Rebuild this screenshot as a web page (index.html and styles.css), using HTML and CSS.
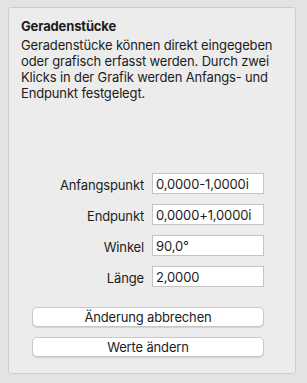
FILE: index.html
```html
<!DOCTYPE html>
<html lang="de">
<head>
    <meta charset="UTF-8">
    <meta name="viewport" content="width=device-width, initial-scale=1.0">
    <title>Geradenstücke</title>
    <link rel="stylesheet" href="styles.css">
</head>
<body>

<div class="panel">
    <h1>Geradenstücke</h1>
    <p class="info">Geradenstücke können direkt eingegeben oder grafisch erfasst werden. Durch zwei Klicks in der Grafik werden Anfangs- und Endpunkt festgelegt.</p>

    <form class="segment-form" onsubmit="event.preventDefault()">
        <label for="start">Anfangspunkt</label>
        <input type="text" id="start" value="0,0000-1,0000i">

        <label for="end">Endpunkt</label>
        <input type="text" id="end" value="0,0000+1,0000i">

        <label for="angle">Winkel</label>
        <input type="text" id="angle" value="90,0°">

        <label for="length">Länge</label>
        <input type="text" id="length" value="2,0000">
    </form>

    <div class="actions">
        <button type="button">Änderung abbrechen</button>
        <button type="button">Werte ändern</button>
    </div>
</div>

</body>
</html>
```

FILE: styles.css
```css
body {
    font-family: Inter, "Noto Sans", sans-serif;
    font-size: 13px;
    letter-spacing: -0.15px;
    color: #1c1c1c;
    margin: 0;
    padding: 7px 11px 9px 8px;
    background: #e3e3e3;
}
.panel {
    height: 367px;
    box-sizing: border-box;
    background: #ececec;
    border: 1px solid #cdcdcd;
    border-radius: 3px;
    padding: 10px 12px 0 12px;
}
.panel h1 {
    margin: 0;
    font-size: 13px;
    line-height: 16px;
    font-weight: 700;
}
.info {
    margin: 3px 0 0;
    line-height: 16px;
}
.segment-form {
    display: grid;
    grid-template-columns: 123px 112px;
    column-gap: 8px;
    row-gap: 10px;
    margin-top: 72px;
}
.segment-form label {
    text-align: right;
    align-self: center;
    line-height: 16px;
    padding-top: 3px;
}
.segment-form input {
    font: inherit;
    letter-spacing: inherit;
    color: #1c1c1c;
    height: 21px;
    box-sizing: border-box;
    padding: 0 3px;
    margin: 0;
    border: 1px solid #c4c4c4;
    background: #fff;
    outline: none;
}
.actions {
    display: flex;
    flex-direction: column;
    gap: 10px;
    margin: 20px 0 0 11px;
    width: 232px;
}
.actions button {
    font: inherit;
    letter-spacing: inherit;
    color: #1c1c1c;
    height: 20px;
    padding: 0;
    background: #fff;
    border: 1px solid #c8c8c8;
    border-radius: 5px;
    box-shadow: 0 1px 1px rgba(0, 0, 0, 0.12);
    cursor: pointer;
}
```
